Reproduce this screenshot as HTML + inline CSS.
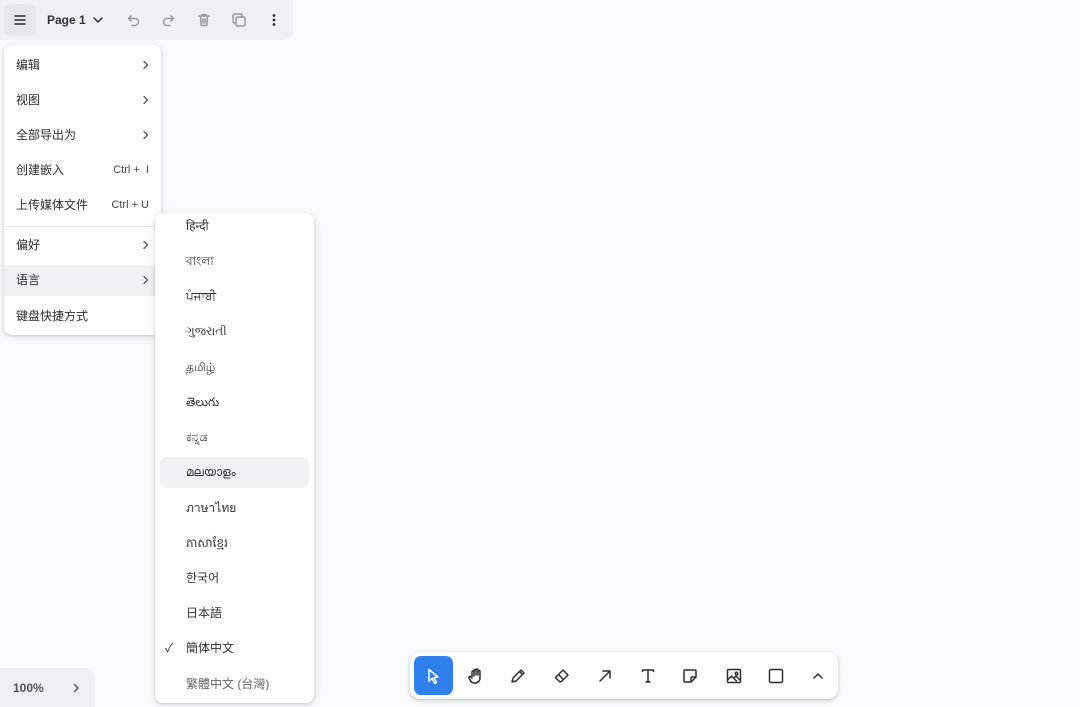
<!DOCTYPE html>
<html><head><meta charset="utf-8"><style>
*{box-sizing:border-box;margin:0;padding:0}
body{width:1080px;height:707px;background:#f9fafb;font-family:"Liberation Sans","Noto Sans CJK SC",sans-serif;color:#1d1d1d;position:relative;overflow:hidden;font-size:12px}
.top{position:absolute;left:0;top:0;width:293px;height:40px;background:#eff0f2;border-bottom-right-radius:10px}
.ic{position:absolute;top:10px;width:20px;height:20px}
.menu{position:absolute;left:4px;top:45px;width:157px;height:290px;background:#fff;border-radius:8px;box-shadow:0 1px 3px rgba(0,0,0,.15),0 2px 10px rgba(0,0,0,.08)}
.mi{position:absolute;left:0;width:157px;height:31px;line-height:31px;padding-left:12px;font-size:12px;color:#2d2d2d}
.mi .r{position:absolute;right:12px;top:0;color:#444;font-size:11px}
.mi svg.ch{position:absolute;right:8px;top:8px;width:14px;height:14px;stroke:#555;stroke-width:1.3}
.sub{position:absolute;left:155px;top:213px;width:159px;height:490px;background:#fff;border-radius:8px;box-shadow:0 1px 3px rgba(0,0,0,.15),0 2px 10px rgba(0,0,0,.08);overflow:hidden}
.si{position:absolute;left:0;width:159px;height:31px;line-height:31px;padding-left:31px;font-size:12px;color:#333;font-family:"Liberation Sans","Noto Sans CJK SC","WenQuanYi Zen Hei",sans-serif}
.zoom{position:absolute;left:0;top:668px;width:95px;height:39px;background:#eff0f2;border-top-right-radius:10px;font-size:12px;font-weight:bold;color:#555}
.tb{position:absolute;left:410px;top:652px;width:428px;height:47px;background:#fff;border-radius:10px;box-shadow:0 1px 3px rgba(0,0,0,.18),0 2px 8px rgba(0,0,0,.06)}
.tbi{position:absolute;top:14px;width:20px;height:20px}
svg{fill:none;stroke:#2d2d2d;stroke-width:1.5;stroke-linecap:round;stroke-linejoin:round}
</style></head><body>
<div class="top">
  <div style="position:absolute;left:4px;top:4px;width:32px;height:32px;background:#e6e7ea;border-radius:6px"></div>
  <svg class="ic" style="left:10px" viewBox="0 0 20 20"><path d="M5 6h10M5 10h10M5 14h10"/></svg>
  <div style="position:absolute;left:47px;top:13px;font-size:12px;font-weight:bold;color:#333">Page 1</div>
  <svg class="ic" style="left:88px" viewBox="0 0 20 20"><path d="M6 8l4 4 4-4"/></svg>
  <svg class="ic" style="left:124px;stroke:#9a9a9a" viewBox="0 0 20 20"><path d="M7 6L4.5 8.5 7 11M5 8.5h6a3.5 3.5 0 010 7H8"/></svg>
  <svg class="ic" style="left:158px;stroke:#9a9a9a" viewBox="0 0 20 20"><path d="M13 6l2.5 2.5L13 11M15 8.5H9a3.5 3.5 0 000 7h3"/></svg>
  <svg class="ic" style="left:194px;stroke:#9a9a9a" viewBox="0 0 20 20"><path d="M5 6h10M8 6V4.5h4V6M6.5 6l.7 9.5h5.6l.7-9.5M9 9v4M11 9v4"/></svg>
  <svg class="ic" style="left:229px;stroke:#9a9a9a" viewBox="0 0 20 20"><rect x="7" y="7" width="9" height="9" rx="1.5"/><path d="M13 7V5.5A1.5 1.5 0 0011.5 4h-6A1.5 1.5 0 004 5.5v6A1.5 1.5 0 005.5 13H7"/></svg>
  <svg class="ic" style="left:264px" viewBox="0 0 20 20"><circle cx="10" cy="5.5" r=".6" fill="#333"/><circle cx="10" cy="10" r=".6" fill="#333"/><circle cx="10" cy="14.5" r=".6" fill="#333"/></svg>
</div>

<div class="menu">
  <div class="mi" style="top:5px">编辑<svg class="ch" viewBox="0 0 14 14"><path d="M5 3.5L8.5 7 5 10.5"/></svg></div>
  <div class="mi" style="top:40px">视图<svg class="ch" viewBox="0 0 14 14"><path d="M5 3.5L8.5 7 5 10.5"/></svg></div>
  <div class="mi" style="top:75px">全部导出为<svg class="ch" viewBox="0 0 14 14"><path d="M5 3.5L8.5 7 5 10.5"/></svg></div>
  <div class="mi" style="top:110px">创建嵌入<span class="r">Ctrl + &nbsp;I</span></div>
  <div class="mi" style="top:145px">上传媒体文件<span class="r">Ctrl + U</span></div>
  <div style="position:absolute;left:0;top:181px;width:157px;height:1px;background:#e8e8e8"></div>
  <div class="mi" style="top:185px">偏好<svg class="ch" viewBox="0 0 14 14"><path d="M5 3.5L8.5 7 5 10.5"/></svg></div>
  <div class="mi" style="top:220px;background:#f0f1f3">语言<svg class="ch" viewBox="0 0 14 14"><path d="M5 3.5L8.5 7 5 10.5"/></svg></div>
  <div class="mi" style="top:256px">键盘快捷方式</div>
</div>

<div class="sub">
  <div class="si" style="top:-2px">हिन्दी</div>
  <div class="si" style="top:33px">বাংলা</div>
  <div class="si" style="top:68px">ਪੰਜਾਬੀ</div>
  <div class="si" style="top:103px">ગુજરાતી</div>
  <div class="si" style="top:139px">தமிழ்</div>
  <div class="si" style="top:174px">తెలుగు</div>
  <div class="si" style="top:209px">ಕನ್ನಡ</div>
  <div class="si" style="top:244px;left:5px;width:149px;padding-left:26px;background:#f0f1f3;border-radius:6px">മലയാളം</div>
  <div class="si" style="top:280px">ภาษาไทย</div>
  <div class="si" style="top:315px">ភាសាខ្មែរ</div>
  <div class="si" style="top:350px">한국어</div>
  <div class="si" style="top:385px">日本語</div>
  <div class="si" style="top:420px"><span style="position:absolute;left:10px">✓</span>簡体中文</div>
  <div class="si" style="top:456px;color:#666">繁體中文 (台灣)</div>
</div>

<div class="zoom"><span style="position:absolute;left:13px;top:13px">100%</span>
<svg style="position:absolute;left:66px;top:10px;width:20px;height:20px;stroke:#555" viewBox="0 0 20 20"><path d="M8.5 6.5l3.5 3.5-3.5 3.5"/></svg></div>

<div class="tb">
  <div style="position:absolute;left:4px;top:4px;width:39px;height:39px;background:#2f80ed;border-radius:7px"></div>
  <svg class="tbi" style="left:13px;stroke:#fff" viewBox="0 0 20 20"><path d="M6 3.5l9 7.5-4 .5 2.5 5-1.8.9-2.5-5L6 15z"/></svg>
  <svg class="tbi" style="left:56px" viewBox="0 0 20 20"><path d="M6 11V6a1 1 0 012 0v4M8 9V4.5a1 1 0 012 0V9M10 9V4a1 1 0 012 0v5M12 9V5.5a1 1 0 012 0V12a5 5 0 01-5 5h-1a4 4 0 01-3-1.5L3 12a1 1 0 011.5-1.3L6 12"/></svg>
  <svg class="tbi" style="left:98px" viewBox="0 0 20 20"><path d="M4 16l1-4 8-8 3 3-8 8zM11.5 5.5l3 3"/></svg>
  <svg class="tbi" style="left:142px" viewBox="0 0 20 20"><path d="M8 16L3.5 11.5 11 4l5 5-6 6zM6.5 8.5l5 5"/></svg>
  <svg class="tbi" style="left:185px" viewBox="0 0 20 20"><path d="M5 15L15 5M8 5h7v7"/></svg>
  <svg class="tbi" style="left:228px" viewBox="0 0 20 20"><path d="M4.5 5.5V4h11v1.5M10 4v12M8 16h4"/></svg>
  <svg class="tbi" style="left:270px" viewBox="0 0 20 20"><path d="M16 11V5a1 1 0 00-1-1H5a1 1 0 00-1 1v10a1 1 0 001 1h6zM11 16v-4a1 1 0 011-1h4"/></svg>
  <svg class="tbi" style="left:314px" viewBox="0 0 20 20"><rect x="3.5" y="3.5" width="13" height="13" rx="1"/><circle cx="12.5" cy="7.5" r="1.2"/><path d="M3.5 14l4-4 5 5M10 12l2-2 4 4"/></svg>
  <svg class="tbi" style="left:356px" viewBox="0 0 20 20"><rect x="3.5" y="3.5" width="13" height="13" rx="1.5"/></svg>
  <svg class="tbi" style="left:398px" viewBox="0 0 20 20"><path d="M6 12l4-4 4 4"/></svg>
</div>
</body></html>
